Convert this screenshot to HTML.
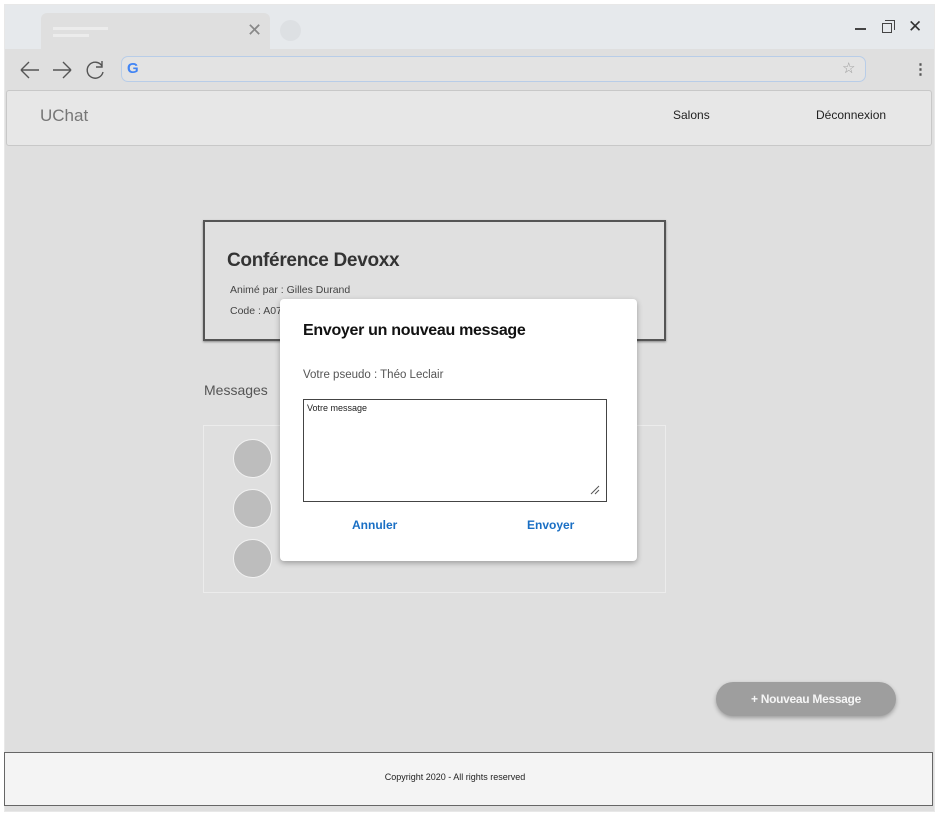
<!DOCTYPE html>
<html><head><meta charset="utf-8"><style>
*{box-sizing:border-box}
body{margin:0;width:938px;height:814px;background:#fff;font-family:"Liberation Sans",sans-serif;position:relative;overflow:hidden}
.a{position:absolute}
</style></head><body>
<div class="a" style="left:4px;top:4px;width:931px;height:808px;background:#dfdfdf;border:1px solid #e8e8e8"></div>
<div class="a" style="left:5px;top:5px;width:929px;height:44px;background:#e6e9ec"></div>
<div class="a" style="left:41px;top:13px;width:229px;height:38px;background:#dfdfdf;border-radius:6px 6px 0 0"></div>
<div class="a" style="left:53px;top:27px;width:55px;height:3px;background:#ececec"></div>
<div class="a" style="left:53px;top:34px;width:36px;height:3px;background:#ececec"></div>
<div class="a" style="left:247px;top:20px;font-size:18px;color:#888">✕</div>
<div class="a" style="left:280px;top:20px;width:21px;height:21px;border-radius:50%;background:#dde0e3"></div>
<div class="a" style="left:855px;top:28px;width:11px;height:2px;background:#444"></div>
<div class="a" style="left:882px;top:23px;width:10px;height:10px;border:1px solid #444;background:#e6e9ec"></div>
<div class="a" style="left:885px;top:20px;width:10px;height:10px;border:1px solid #444;border-left:none;border-bottom:none"></div>
<div class="a" style="left:908px;top:17px;font-size:17px;color:#333">✕</div>
<div class="a" style="left:5px;top:49px;width:929px;height:40px;background:#dfdfdf"></div>
<svg class="a" style="left:18px;top:58px" width="90" height="24" fill="none" stroke="#555" stroke-width="1.4"><path d="M3 12h18M3 12l8-8M3 12l8 8"/><path d="M35 12h18M53 12l-8-8M53 12l-8 8"/><path d="M84 8a8 8 0 1 0 1 6M84 3v6h-6"/></svg>
<div class="a" style="left:121px;top:56px;width:745px;height:26px;border:1.5px solid #b8cde8;border-radius:7px;background:#e3e3e3"></div>
<div class="a" style="left:127px;top:61px;font-size:15px;font-weight:bold;color:#4285f4;line-height:16px">G</div>
<div class="a" style="left:842px;top:60px;font-size:15px;color:#999;line-height:18px">☆</div>
<div class="a" style="left:913px;top:60px;font-size:15px;color:#555;font-weight:bold">⋮</div>
<div class="a" style="left:6px;top:90px;width:926px;height:56px;background:#e7e7e7;border:1px solid #c8c8c8;border-radius:3px"></div>
<div class="a" style="left:40px;top:106px;font-size:17px;color:#777">UChat</div>
<div class="a" style="left:673px;top:108px;font-size:12px;color:#222">Salons</div>
<div class="a" style="left:816px;top:108px;font-size:12px;color:#222">Déconnexion</div>
<div class="a" style="left:203px;top:220px;width:463px;height:121px;border:2px solid #555;background:#e0e0e0;box-shadow:0 1px 2px #888"></div>
<div class="a" style="left:227px;top:250px;font-size:19px;font-weight:bold;color:#333;letter-spacing:-0.3px">Conférence Devoxx</div>
<div class="a" style="left:230px;top:284px;font-size:10.5px;color:#444">Animé par : Gilles Durand</div>
<div class="a" style="left:230px;top:305px;font-size:10.5px;color:#444">Code : A07</div>
<div class="a" style="left:204px;top:382px;font-size:14px;color:#555">Messages</div>
<div class="a" style="left:203px;top:425px;width:463px;height:168px;border:1px solid #ececec"></div>
<div class="a" style="left:233px;top:439px;width:39px;height:39px;border-radius:50%;background:#bdbdbd;border:1px solid #f2f2f2"></div>
<div class="a" style="left:233px;top:489px;width:39px;height:39px;border-radius:50%;background:#bdbdbd;border:1px solid #f2f2f2"></div>
<div class="a" style="left:233px;top:539px;width:39px;height:39px;border-radius:50%;background:#bdbdbd;border:1px solid #f2f2f2"></div>
<div class="a" style="left:280px;top:299px;width:357px;height:262px;background:#fff;border-radius:4px;box-shadow:0 2px 6px rgba(0,0,0,.3)"></div>
<div class="a" style="left:303px;top:322px;font-size:16px;font-weight:bold;color:#111;letter-spacing:-0.3px">Envoyer un nouveau message</div>
<div class="a" style="left:303px;top:369px;font-size:11.5px;color:#555">Votre pseudo : Théo Leclair</div>
<div class="a" style="left:303px;top:399px;width:304px;height:103px;border:1px solid #444"></div>
<div class="a" style="left:307px;top:403px;font-size:9px;color:#222">Votre message</div>
<svg class="a" style="left:589px;top:484px" width="12" height="12" stroke="#555"><path d="M2 10L10 2M6 10L10 6"/></svg>
<div class="a" style="left:352px;top:518px;font-size:12px;font-weight:bold;color:#1a6fc4">Annuler</div>
<div class="a" style="left:527px;top:518px;font-size:12px;font-weight:bold;color:#1a6fc4">Envoyer</div>
<div class="a" style="left:716px;top:682px;width:180px;height:34px;border-radius:17px;background:#9e9e9e;box-shadow:0 2px 4px rgba(0,0,0,.3);color:#f5f5f5;font-size:12px;font-weight:bold;text-align:center;line-height:34px;letter-spacing:-0.3px">+ Nouveau Message</div>
<div class="a" style="left:4px;top:752px;width:929px;height:54px;background:#f4f4f4;border:1px solid #666"></div>
<div class="a" style="left:0;top:772px;width:910px;text-align:center;font-size:9px;color:#222">Copyright 2020 - All rights reserved</div>
</body></html>
